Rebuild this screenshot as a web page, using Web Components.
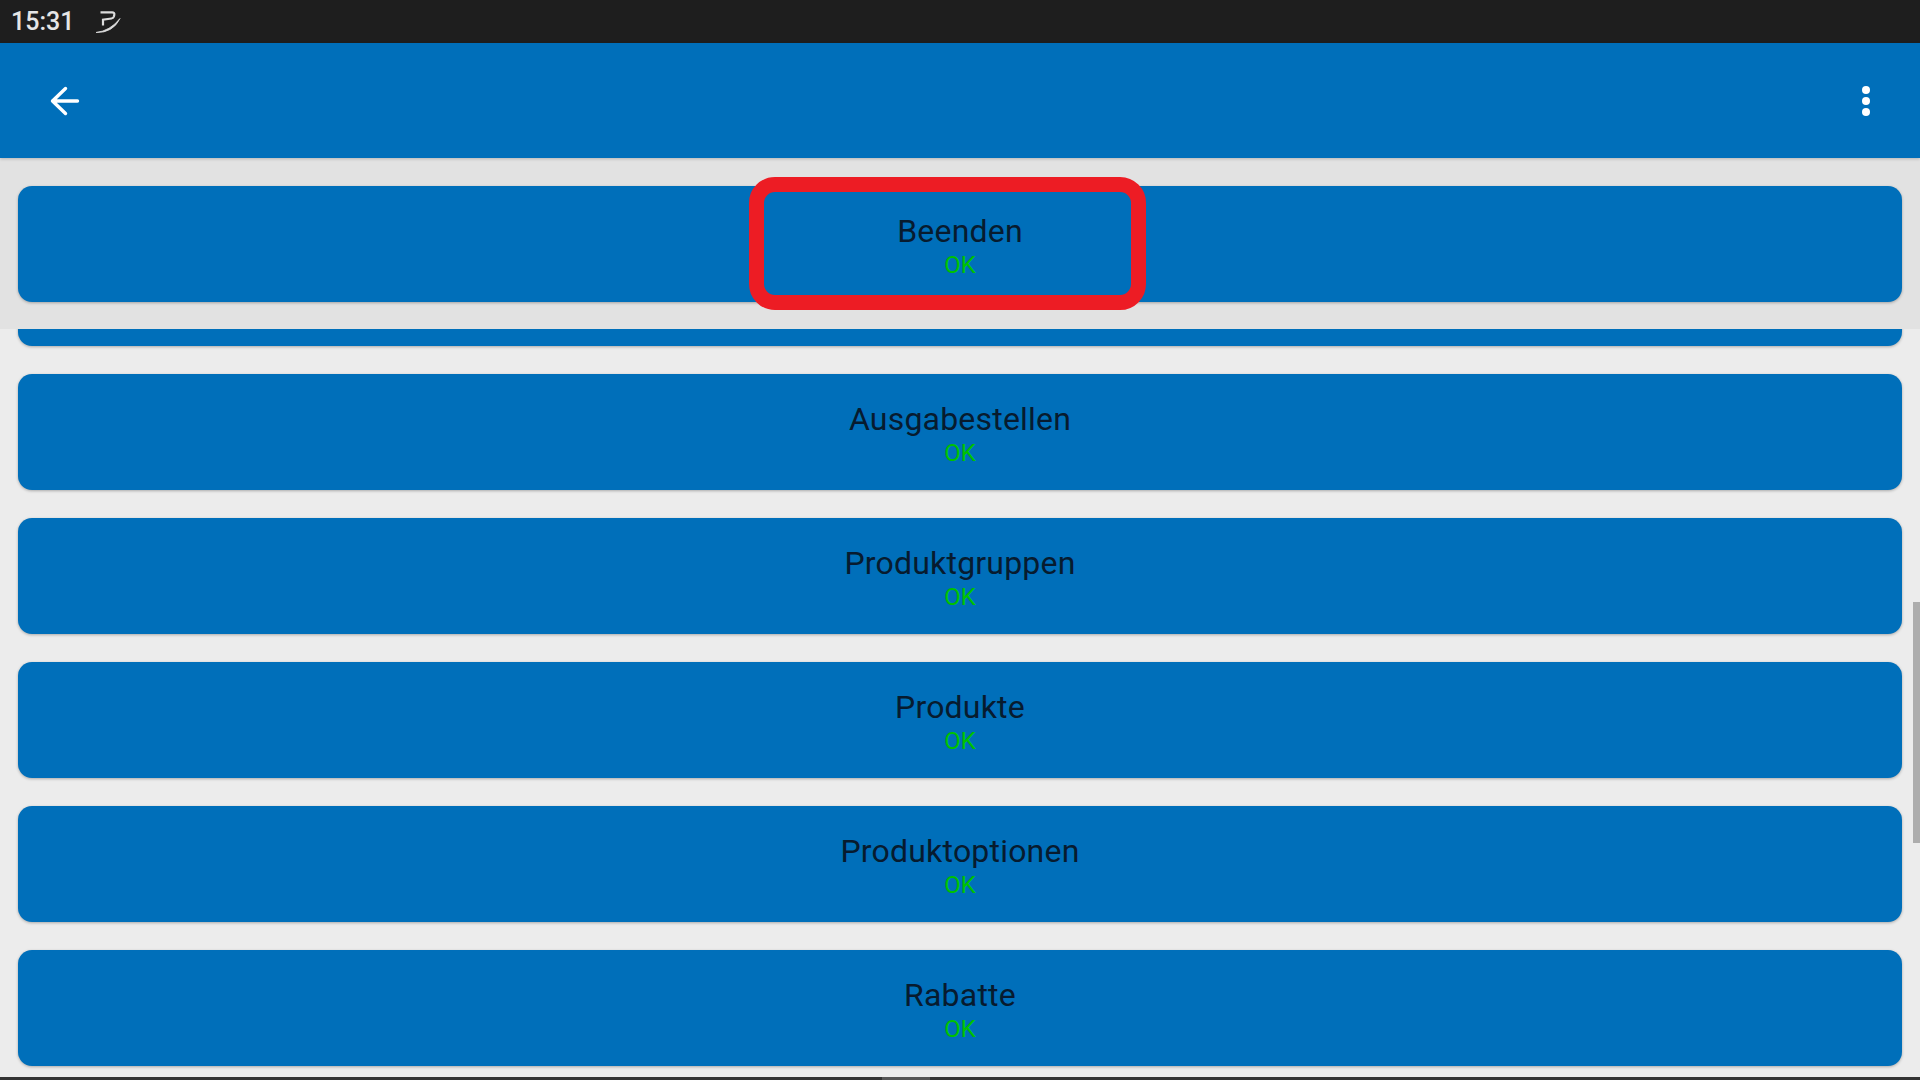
<!DOCTYPE html>
<html>
<head>
<meta charset="utf-8">
<title>Status</title>
<style>
    html, body { margin: 0; height: 100%; }
    body {
        width: 1920px;
        height: 1080px;
        overflow: hidden;
        display: flex;
        flex-direction: column;
        background: #ececec;
        font-family: Roboto, "Liberation Sans", sans-serif;
    }
    check-list { flex: 1; min-height: 0; }
</style>
</head>
<body>
<status-bar time="15:31"></status-bar>
<app-bar></app-bar>
<check-list>
    <check-card slot="pinned" title="Beenden" status="OK"></check-card>
    <check-card title="" status="" style="margin-top:-99px"></check-card>
    <check-card title="Ausgabestellen" status="OK"></check-card>
    <check-card title="Produktgruppen" status="OK"></check-card>
    <check-card title="Produkte" status="OK"></check-card>
    <check-card title="Produktoptionen" status="OK"></check-card>
    <check-card title="Rabatte" status="OK"></check-card>
</check-list>
<nav-strip></nav-strip>

<script>
class StatusBar extends HTMLElement {
    constructor() {
        super();
        this.attachShadow({ mode: 'open' });
    }

    connectedCallback() {
        this.shadowRoot.innerHTML = `
            <style>
                :host {
                    display: flex;
                    align-items: center;
                    gap: 20px;
                    height: 43px;
                    flex: none;
                    padding-left: 11px;
                    background: #1e1e1e;
                    color: #e6e6e6;
                    font-size: 25px;
                    font-weight: 500;
                }
                svg { display: block; }
            </style>
            <span>${this.getAttribute('time') || ''}</span>
            <svg width="28" height="26" viewBox="0 0 28 26" fill="none" stroke="#dcdcdc">
                <path d="M6.5 3.4H18Q20.8 3.4 20.3 5.8L19.9 7.6Q19.5 9.2 17.5 9.5L9 10.7V16.5" stroke-width="2.2"/>
                <path d="M2 23.5Q16 22 26 9.5Q19 24 2 23.5Z" fill="#dcdcdc" stroke-width="0.8"/>
            </svg>
        `;
    }
}

class AppBar extends HTMLElement {
    constructor() {
        super();
        this.attachShadow({ mode: 'open' });
        this.shadowRoot.innerHTML = `
            <style>
                :host {
                    display: flex;
                    align-items: center;
                    justify-content: space-between;
                    height: 115px;
                    flex: none;
                    padding: 0 50px;
                    box-sizing: border-box;
                    background: #006fba;
                    position: relative;
                    z-index: 2;
                    box-shadow: 0 1px 3px rgba(0,0,0,0.2);
                }
                svg { display: block; }
            </style>
            <svg width="30" height="30" viewBox="0 0 30 30" fill="none" stroke="#fff" stroke-width="3.4" stroke-linecap="round" stroke-linejoin="round">
                <path d="M27.5 15H2.5M15.5 2.5L2.5 15L15.5 27.5"/>
            </svg>
            <svg width="10" height="32" viewBox="0 0 10 32" fill="#fff" style="margin-right:-1px">
                <circle cx="5" cy="5" r="4"/>
                <circle cx="5" cy="16" r="4"/>
                <circle cx="5" cy="27" r="4"/>
            </svg>
        `;
    }
}

class CheckList extends HTMLElement {
    constructor() {
        super();
        this.attachShadow({ mode: 'open' });
        this.shadowRoot.innerHTML = `
            <style>
                :host {
                    display: flex;
                    flex-direction: column;
                    overflow: hidden;
                    position: relative;
                }
                .pinned {
                    position: relative;
                    z-index: 1;
                    flex: none;
                    height: 171px;
                    box-sizing: border-box;
                    padding: 28px 18px 0;
                    background: #e2e2e2;
                }
                .mark {
                    position: absolute;
                    left: 749px;
                    top: 19px;
                    width: 397px;
                    height: 133px;
                    box-sizing: border-box;
                    border: 15px solid #ed1c24;
                    border-radius: 26px;
                }
                .rows {
                    flex: 1;
                    min-height: 0;
                    display: flex;
                    flex-direction: column;
                    gap: 28px;
                    padding: 0 18px;
                }
                .bar {
                    position: absolute;
                    right: 0;
                    top: 444px;
                    width: 7px;
                    height: 241px;
                    background: #adadad;
                }
            </style>
            <div class="pinned">
                <slot name="pinned"></slot>
                <div class="mark"></div>
            </div>
            <div class="rows"><slot></slot></div>
            <div class="bar"></div>
        `;
    }
}

class CheckCard extends HTMLElement {
    constructor() {
        super();
        this.attachShadow({ mode: 'open' });
    }

    connectedCallback() {
        const title = this.getAttribute('title') || '';
        const status = this.getAttribute('status') || '';
        this.shadowRoot.innerHTML = `
            <style>
                :host {
                    display: flex;
                    flex-direction: column;
                    align-items: center;
                    flex: none;
                    height: 116px;
                    box-sizing: border-box;
                    padding-top: 25px;
                    background: #006fba;
                    border-radius: 14px;
                    box-shadow: 0 1px 3px rgba(0,0,0,0.28);
                }
                .title {
                    font-size: 32px;
                    line-height: 40px;
                    letter-spacing: 0.2px;
                    color: #071b2f;
                }
                .status {
                    font-size: 24px;
                    line-height: 28px;
                    color: #00c200;
                }
            </style>
            <div class="title">${title}</div>
            <div class="status">${status}</div>
        `;
    }
}

class NavStrip extends HTMLElement {
    constructor() {
        super();
        this.attachShadow({ mode: 'open' });
        this.shadowRoot.innerHTML = `
            <style>
                :host {
                    display: flex;
                    height: 3px;
                    flex: none;
                    padding-left: 882px;
                    background: #333;
                }
                .thumb { width: 48px; background: #555; }
            </style>
            <div class="thumb"></div>
        `;
    }
}

customElements.define('status-bar', StatusBar);
customElements.define('app-bar', AppBar);
customElements.define('check-list', CheckList);
customElements.define('check-card', CheckCard);
customElements.define('nav-strip', NavStrip);
</script>
</body>
</html>
